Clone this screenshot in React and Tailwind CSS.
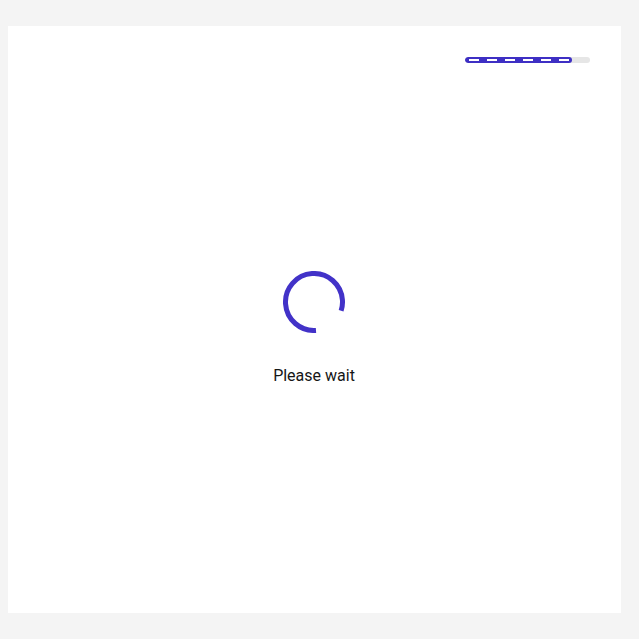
import React from 'react';

// dashed stripe inside the filled part of the bar
const dashes = [0, 1, 2, 3, 4, 5];

const Spinner = () => (
    <svg width="62" height="62" viewBox="0 0 62 62" className="block">
        <circle
            cx="31"
            cy="31"
            r="28.5"
            fill="none"
            stroke="#4232c8"
            strokeWidth="5"
            strokeDasharray="145 34"
            transform="rotate(86 31 31)"
        />
    </svg>
);

const App = () => {
    return (
        <div className="min-h-[639px] bg-[#f4f4f4] pt-[26px] pl-2" style={{ fontFamily: 'Roboto, "Noto Sans", sans-serif' }}>
            <div className="w-[613px] h-[587px] bg-white flex flex-col">
                {/* Progress */}
                <div className="flex justify-end pt-[31px] pr-[31px]">
                    <div className="w-[125px] h-[6px] rounded-full bg-[#e6e6e6] overflow-hidden">
                        <div className="w-[107px] h-full rounded-full bg-[#3e2fc4] flex items-center gap-[8px] pl-[4px]">
                            {dashes.map((d) => (
                                <span key={d} className="block w-[10px] h-[1.5px] bg-white" />
                            ))}
                        </div>
                    </div>
                </div>

                {/* Loading */}
                <div className="flex flex-col items-center mt-[208px] ml-[-1px]">
                    <Spinner />
                    <p className="mt-[33px] text-[16px] leading-[20px] text-[#161616]">Please wait</p>
                </div>
            </div>
        </div>
    );
};

export default App;
